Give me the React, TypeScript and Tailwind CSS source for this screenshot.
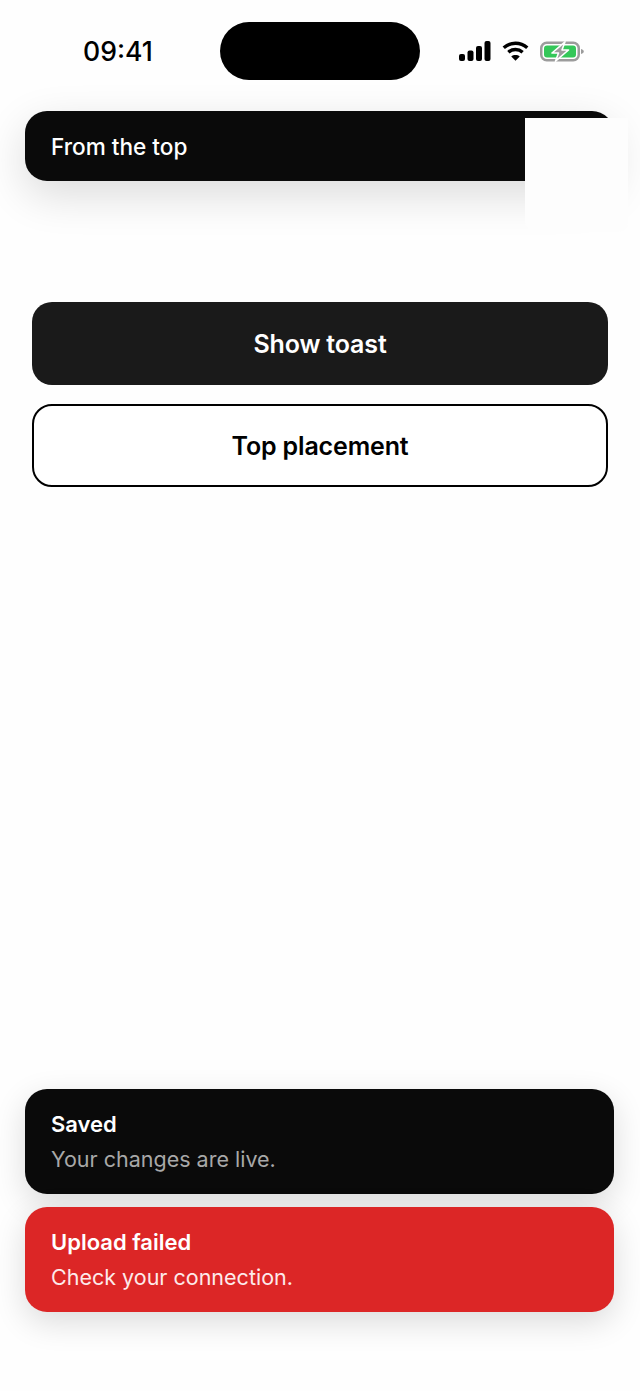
import React from 'react';

function StatusIcons() {
  return (
    <div className="flex items-center">
      <svg width="32" height="20" viewBox="0 0 32 20" fill="#000">
        <rect x="0" y="13" width="6" height="7" rx="2" />
        <rect x="8.5" y="9.5" width="6" height="10.5" rx="2" />
        <rect x="17" y="5" width="6" height="15" rx="2" />
        <rect x="25.5" y="0" width="6" height="20" rx="2" />
      </svg>
      <svg className="ml-[11px]" width="27" height="20" viewBox="0 0 28 20" fill="none" stroke="#000" strokeWidth="3.6">
        <path d="M1.8 6.6C9 0.3 19 0.3 26.2 6.6" />
        <path d="M6.6 11.3C11 7.6 17 7.6 21.4 11.3" />
        <path d="M14 20L9.6 15.6C12 13.7 16 13.7 18.4 15.6Z" fill="#000" stroke="none" />
      </svg>
      <svg className="ml-[11px]" width="44" height="21" viewBox="0 0 44 21" fill="none">
        <rect x="1.25" y="1.75" width="37.5" height="17.5" rx="5.5" stroke="#9c9c9c" strokeWidth="2.5" />
        <rect x="4" y="4.5" width="32" height="12" rx="3" fill="#34c759" />
        <path d="M41 8C42.8 8.4 43.8 9.4 43.8 10.5C43.8 11.6 42.8 12.6 41 13Z" fill="#9c9c9c" />
        <path d="M25 0.8L12 12H18.5L15.5 20.2L28.5 9H22Z" fill="#9c9c9c" stroke="#fff" strokeWidth="1.6" strokeLinejoin="round" />
      </svg>
    </div>
  );
}

function StatusBar() {
  return (
    <div className="h-[80px] pt-[22px] flex items-center pl-[83px]">
      <span className="w-[137px] text-[26.6px] leading-[32px] font-medium text-black">09:41</span>
      <div className="w-[200px] h-[58px] rounded-[29px] bg-black" />
      <div className="ml-[39px]">
        <StatusIcons />
      </div>
    </div>
  );
}

function Toast({ title, body, className }: { title: string; body: string; className: string }) {
  return (
    <div className={`h-[105px] rounded-[22px] px-[26px] pt-[20px] shadow-[0_10px_32px_rgba(0,0,0,0.14)] ${className}`}>
      <div className="text-[22px] leading-[30px] font-semibold text-white">{title}</div>
      <div className="text-[21.5px] leading-[30px] mt-[5px] text-inherit">{body}</div>
    </div>
  );
}

export default function App() {
  return (
    <div className="relative w-[640px] h-[1391px] overflow-hidden bg-[#fefefe] [font-family:Inter,sans-serif]">
      <StatusBar />

      {/* buttons */}
      <div className="flex flex-col gap-[19px] px-[32px] pt-[222px]">
        <button className="h-[83px] rounded-[20px] bg-[#1a1a1a] text-white text-[25px] tracking-[-0.15px] font-semibold pt-[3px]">
          Show toast
        </button>
        <button className="h-[83px] rounded-[20px] border-[2.5px] border-black bg-white text-black text-[25px] tracking-[-0.15px] font-semibold pt-[3px]">
          Top placement
        </button>
      </div>

      {/* top toast, with the unfinished white block sitting on its end */}
      <div className="absolute left-[25px] right-[26px] top-[111px] h-[70px] rounded-[22px] bg-[#0a0a0a] px-[26px] pt-[2px] flex items-center shadow-[0_14px_44px_rgba(0,0,0,0.14)]">
        <span className="text-white text-[22.6px] font-medium">From the top</span>
      </div>
      <div className="absolute left-[525px] top-[118px] w-[103px] h-[114px] bg-[#fdfdfd] rounded-b-[10px]" />

      {/* bottom stack */}
      <div className="absolute left-[25px] right-[26px] top-[1089px] flex flex-col gap-[13px]">
        <Toast title="Saved" body="Your changes are live." className="bg-[#0a0a0a] text-[#a8a8a8]" />
        <Toast title="Upload failed" body="Check your connection." className="bg-[#dc2626] text-[#fdeaea]" />
      </div>
    </div>
  );
}
